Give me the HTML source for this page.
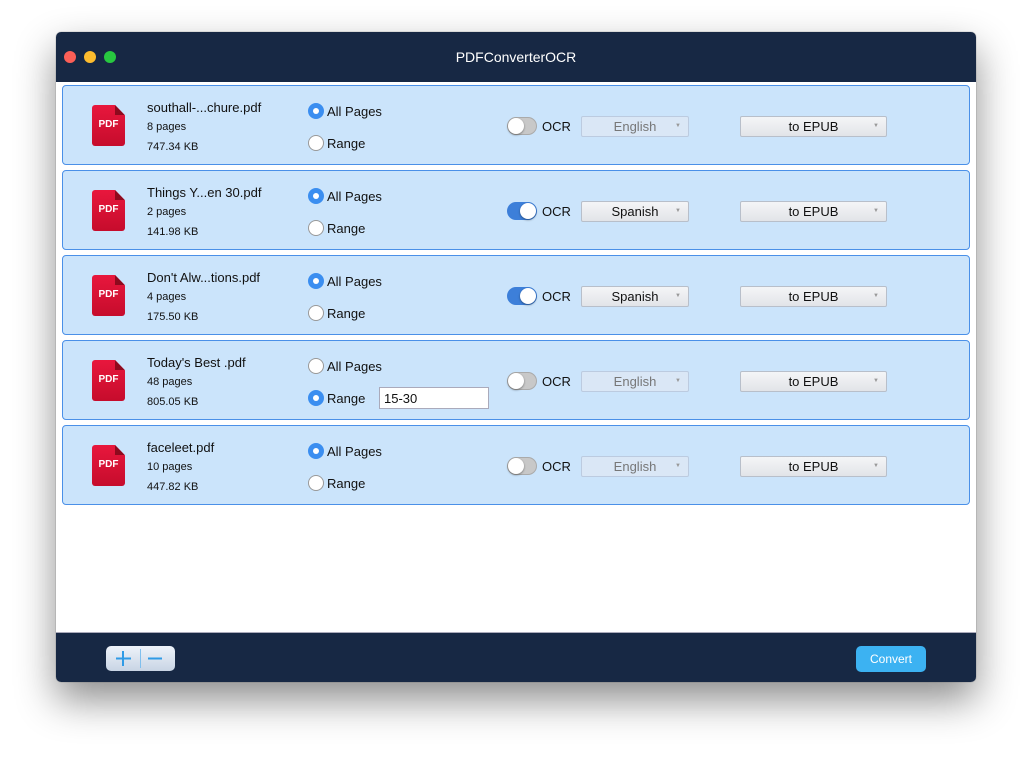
<!DOCTYPE html>
<html><head><style>
*{margin:0;padding:0;box-sizing:border-box}
body{width:1032px;height:762px;background:#fff;position:relative;overflow:hidden;font-family:"Liberation Sans",sans-serif;color:#111}
.win{position:absolute;left:56px;top:32px;width:920px;height:650px;border-radius:5px;background:#fff;box-shadow:0 18px 40px rgba(0,0,0,.45),0 0 1px rgba(0,0,0,.5);overflow:hidden}
.title{position:absolute;left:0;top:0;width:920px;height:50px;background:#172844;color:#fff;font-size:14px;text-align:center;line-height:50px}
.dot{position:absolute;top:19px;width:12px;height:12px;border-radius:50%}
.foot{position:absolute;left:0;top:600px;width:920px;height:50px;background:#172844;border-top:1px solid #aab}
.row{position:absolute;left:6px;width:908px;height:80px;background:#cbe4fb;border:1px solid #4a90e8;border-radius:4px}
.ic{position:absolute;left:29px;top:19px;width:33px;height:41px;background:linear-gradient(#e8173d,#c60c2c);border-radius:3px;clip-path:polygon(0 0,70% 0,100% 25%,100% 100%,0 100%)}
.ic:after{content:"";position:absolute;right:0;top:0;width:10px;height:10px;background:#8e0a1e;clip-path:polygon(0 0,100% 100%,0 100%)}
.ic span{position:absolute;left:0;width:33px;top:14px;text-align:center;color:#fff;font-size:10px;font-weight:bold}
.t{position:absolute;font-size:13px;white-space:nowrap}
.s{position:absolute;font-size:11px;white-space:nowrap}
.rad{position:absolute;width:16px;height:16px;border-radius:50%;background:#fff;border:1px solid #999}
.rad.on{background:#3b8ef0;border-color:#3b8ef0}
.rad.on:after{content:"";position:absolute;left:4px;top:4px;width:6px;height:6px;border-radius:50%;background:#fff}
.tg{position:absolute;left:444px;top:31px;width:30px;height:18px;border-radius:9px;background:#c8c8c8;border:1px solid #aaa}
.tg:after{content:"";position:absolute;left:0;top:0;width:16px;height:16px;border-radius:50%;background:#fff;box-shadow:0 1px 2px rgba(0,0,0,.4)}
.tg.on{background:#3d7fd9;border-color:#3d7fd9}
.tg.on:after{left:12px}
.dd{position:absolute;top:30px;height:21px;border:1px solid #b8bfca;border-radius:2px;background:linear-gradient(#f4f5f7,#e2e4e8);font-size:13px;text-align:center;line-height:19px;color:#111}
.dd.dis{background:#dae7f6;color:#777;border-color:#bccbe0}
.dd:after{content:"▼";position:absolute;right:7px;top:0;font-size:6px;color:#999}
</style></head><body>
<div class="win">
<div class="title">PDFConverterOCR
<div class="dot" style="left:8px;background:#fc5f57"></div><div class="dot" style="left:28px;background:#fdbc2e"></div><div class="dot" style="left:48px;background:#28c840"></div></div>

<div class="row" style="top:53px"><div class="ic"><span>PDF</span></div>
<div class="t" style="left:84px;top:14px">southall-...chure.pdf</div><div class="s" style="left:84px;top:35px">8 pages</div><div class="s" style="left:84px;top:55px">747.34 KB</div>
<div class="rad on" style="left:245px;top:17px"></div><div class="t" style="left:264px;top:18px">All Pages</div>
<div class="rad" style="left:245px;top:49px"></div><div class="t" style="left:264px;top:50px">Range</div>
<div class="tg"></div><div class="t" style="left:479px;top:33px">OCR</div>
<div class="dd dis" style="left:518px;width:108px">English</div><div class="dd" style="left:677px;width:147px">to EPUB</div></div>

<div class="row" style="top:138px"><div class="ic"><span>PDF</span></div>
<div class="t" style="left:84px;top:14px">Things Y...en 30.pdf</div><div class="s" style="left:84px;top:35px">2 pages</div><div class="s" style="left:84px;top:55px">141.98 KB</div>
<div class="rad on" style="left:245px;top:17px"></div><div class="t" style="left:264px;top:18px">All Pages</div>
<div class="rad" style="left:245px;top:49px"></div><div class="t" style="left:264px;top:50px">Range</div>
<div class="tg on"></div><div class="t" style="left:479px;top:33px">OCR</div>
<div class="dd" style="left:518px;width:108px">Spanish</div><div class="dd" style="left:677px;width:147px">to EPUB</div></div>

<div class="row" style="top:223px"><div class="ic"><span>PDF</span></div>
<div class="t" style="left:84px;top:14px">Don't Alw...tions.pdf</div><div class="s" style="left:84px;top:35px">4 pages</div><div class="s" style="left:84px;top:55px">175.50 KB</div>
<div class="rad on" style="left:245px;top:17px"></div><div class="t" style="left:264px;top:18px">All Pages</div>
<div class="rad" style="left:245px;top:49px"></div><div class="t" style="left:264px;top:50px">Range</div>
<div class="tg on"></div><div class="t" style="left:479px;top:33px">OCR</div>
<div class="dd" style="left:518px;width:108px">Spanish</div><div class="dd" style="left:677px;width:147px">to EPUB</div></div>

<div class="row" style="top:308px"><div class="ic"><span>PDF</span></div>
<div class="t" style="left:84px;top:14px">Today's Best .pdf</div><div class="s" style="left:84px;top:35px">48 pages</div><div class="s" style="left:84px;top:55px">805.05 KB</div>
<div class="rad" style="left:245px;top:17px"></div><div class="t" style="left:264px;top:18px">All Pages</div>
<div class="rad on" style="left:245px;top:49px"></div><div class="t" style="left:264px;top:50px">Range</div>
<div style="position:absolute;left:316px;top:46px;width:110px;height:22px;background:#fff;border:1px solid #aab;font-size:13px;padding:3px 4px">15-30</div>
<div class="tg"></div><div class="t" style="left:479px;top:33px">OCR</div>
<div class="dd dis" style="left:518px;width:108px">English</div><div class="dd" style="left:677px;width:147px">to EPUB</div></div>

<div class="row" style="top:393px"><div class="ic"><span>PDF</span></div>
<div class="t" style="left:84px;top:14px">faceleet.pdf</div><div class="s" style="left:84px;top:35px">10 pages</div><div class="s" style="left:84px;top:55px">447.82 KB</div>
<div class="rad on" style="left:245px;top:17px"></div><div class="t" style="left:264px;top:18px">All Pages</div>
<div class="rad" style="left:245px;top:49px"></div><div class="t" style="left:264px;top:50px">Range</div>
<div class="tg"></div><div class="t" style="left:479px;top:33px">OCR</div>
<div class="dd dis" style="left:518px;width:108px">English</div><div class="dd" style="left:677px;width:147px">to EPUB</div></div>

<div class="foot">
<div style="position:absolute;left:50px;top:13px;width:69px;height:25px;border-radius:5px;background:linear-gradient(#eef3fa,#c8d4e4)">
<div style="position:absolute;left:34px;top:3px;width:1px;height:19px;background:#7fbfee"></div>
<svg width="69" height="25" style="position:absolute;left:0;top:0"><path d="M17 5v15M10 12.5h15M42 12.5h14" stroke="#2f9be6" stroke-width="2"/></svg></div>
<div style="position:absolute;left:800px;top:13px;width:70px;height:26px;border-radius:5px;background:#3cb2f2;color:#fff;font-size:12px;text-align:center;line-height:26px">Convert</div>
</div>
</div>
</body></html>
